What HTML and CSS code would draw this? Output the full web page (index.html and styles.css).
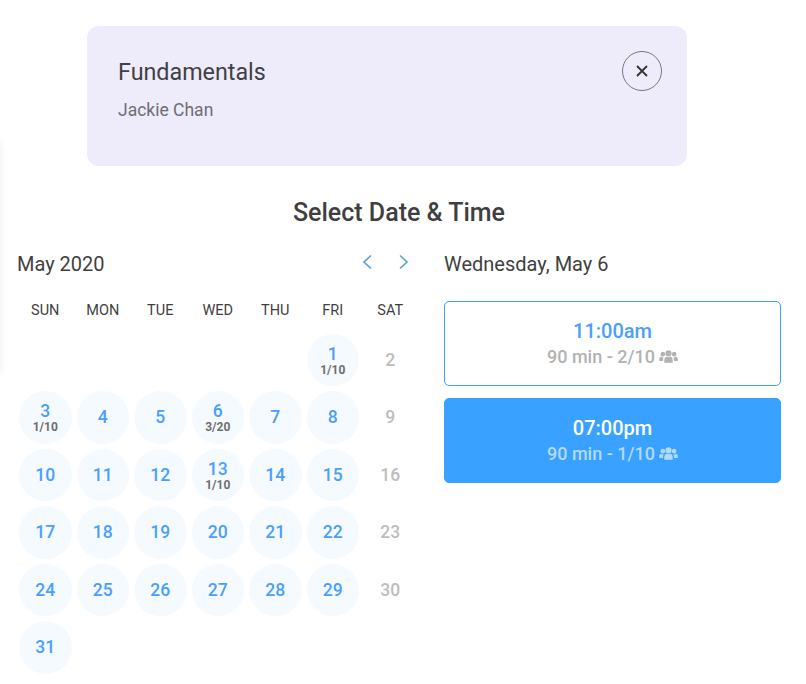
FILE: index.html
```html
<!DOCTYPE html>
<html lang="en">
<head>
<meta charset="utf-8">
<title>Select Date &amp; Time</title>
<link rel="stylesheet" href="styles.css">
</head>
<body>
<div class="edge-shadow"></div>
<main class="page">
  <section class="summary">
    <div class="summary-text">
      <h2 class="summary-title">Fundamentals</h2>
      <p class="summary-sub">Jackie Chan</p>
    </div>
    <button class="close" aria-label="Close">
      <svg class="close-icon" viewBox="0 0 12 12" width="12" height="12"><path d="M1 1l10 10M11 1L1 11"/></svg>
    </button>
  </section>
  <h1 class="heading">Select Date &amp; Time</h1>
  <div class="columns">
    <section class="calendar">
      <div class="cal-head">
        <span class="month">May 2020</span>
        <div class="nav">
          <svg class="chev" viewBox="0 0 10 16" width="10" height="16"><path d="M8 1.500L1 8l7 6.500"/></svg>
          <svg class="chev" viewBox="0 0 10 16" width="10" height="16"><path d="M1 1.500L8 8l-7 6.500"/></svg>
        </div>
      </div>
      <div class="weekdays">
        <span>SUN</span><span>MON</span><span>TUE</span><span>WED</span><span>THU</span><span>FRI</span><span>SAT</span>
      </div>
      <div class="days">
        <span class="day blank"></span><span class="day blank"></span><span class="day blank"></span><span class="day blank"></span><span class="day blank"></span>
        <div class="day on count"><b>1</b><small>1/10</small></div>
        <div class="day off"><b>2</b></div>
        <div class="day on count"><b>3</b><small>1/10</small></div>
        <div class="day on"><b>4</b></div>
        <div class="day on"><b>5</b></div>
        <div class="day on count"><b>6</b><small>3/20</small></div>
        <div class="day on"><b>7</b></div>
        <div class="day on"><b>8</b></div>
        <div class="day off"><b>9</b></div>
        <div class="day on"><b>10</b></div>
        <div class="day on"><b>11</b></div>
        <div class="day on"><b>12</b></div>
        <div class="day on count"><b>13</b><small>1/10</small></div>
        <div class="day on"><b>14</b></div>
        <div class="day on"><b>15</b></div>
        <div class="day off"><b>16</b></div>
        <div class="day on"><b>17</b></div>
        <div class="day on"><b>18</b></div>
        <div class="day on"><b>19</b></div>
        <div class="day on"><b>20</b></div>
        <div class="day on"><b>21</b></div>
        <div class="day on"><b>22</b></div>
        <div class="day off"><b>23</b></div>
        <div class="day on"><b>24</b></div>
        <div class="day on"><b>25</b></div>
        <div class="day on"><b>26</b></div>
        <div class="day on"><b>27</b></div>
        <div class="day on"><b>28</b></div>
        <div class="day on"><b>29</b></div>
        <div class="day off"><b>30</b></div>
        <div class="day on"><b>31</b></div>
      </div>
    </section>
    <section class="times">
      <div class="date-label">Wednesday, May 6</div>
      <div class="slot">
        <div class="slot-time">11:00am</div>
        <div class="slot-meta">90 min - 2/10
          <svg class="people" viewBox="0 0 20 14" width="19" height="13"><path d="M10 .4a3.300 3.300 0 1 1 0 6.600 3.300 3.300 0 0 1 0-6.600zM3.900 2a2.500 2.500 0 1 1 0 5 2.500 2.500 0 0 1 0-5zM16.100 2a2.500 2.500 0 1 1 0 5 2.500 2.500 0 0 1 0-5zM5.500 13.600v-2.800c0-1.900 1.200-3.200 2.500-3.400.6.300 1.200.5 2 .5s1.400-.2 2-.5c1.300.2 2.500 1.500 2.500 3.400v2.800zM0 11.800V9.600C0 8.500.9 7.500 1.900 7.400c.6.400 1.200.6 2 .6.400 0 .8-.1 1.200-.2-.6.800-1 1.900-1 3v1zM20 11.800h-4.100v-1c0-1.100-.4-2.200-1-3 .4.100.8.200 1.200.2.800 0 1.400-.2 2-.6 1 .1 1.900 1.100 1.900 2.200z"/></svg>
        </div>
      </div>
      <div class="slot active">
        <div class="slot-time">07:00pm</div>
        <div class="slot-meta">90 min - 1/10
          <svg class="people" viewBox="0 0 20 14" width="19" height="13"><path d="M10 .4a3.300 3.300 0 1 1 0 6.600 3.300 3.300 0 0 1 0-6.600zM3.900 2a2.500 2.500 0 1 1 0 5 2.500 2.500 0 0 1 0-5zM16.100 2a2.500 2.500 0 1 1 0 5 2.500 2.500 0 0 1 0-5zM5.500 13.600v-2.800c0-1.900 1.200-3.200 2.500-3.400.6.300 1.200.5 2 .5s1.400-.2 2-.5c1.300.2 2.500 1.500 2.500 3.400v2.800zM0 11.800V9.600C0 8.500.9 7.500 1.900 7.400c.6.400 1.200.6 2 .6.400 0 .8-.1 1.200-.2-.6.800-1 1.900-1 3v1zM20 11.800h-4.100v-1c0-1.100-.4-2.200-1-3 .4.100.8.200 1.200.2.800 0 1.400-.2 2-.6 1 .1 1.900 1.100 1.900 2.200z"/></svg>
        </div>
      </div>
    </section>
  </div>
</main>
</body>
</html>
```
FILE: styles.css
```css
* { box-sizing: border-box; }
html, body { margin: 0; padding: 0; height: 684px; overflow: hidden; background: #fff; }
body { font-family: Roboto, "Liberation Sans", sans-serif; color: #3f3f3f; }
.edge-shadow { position: absolute; left: -20px; top: 140px; width: 20px; height: 235px; border-radius: 6px; box-shadow: 0 0 10px rgba(0,0,0,.08); }
.page { width: 806px; padding-top: 26px; }
.summary { width: 600px; height: 140px; margin-left: 87px; padding: 25px 25px 0 31px; background: #eeebfa; border-radius: 12px; display: flex; justify-content: space-between; align-items: flex-start; }
.summary-title { margin: 7px 0 0; font-size: 23.3px; font-weight: 400; line-height: 28px; color: #3f3f46; }
.summary-sub { margin: 13px 0 0; font-size: 17.5px; line-height: 22px; color: #6f6c76; }
.close { width: 40px; height: 40px; padding: 0; border: 1px solid #77777c; border-radius: 50%; background: transparent; display: flex; align-items: center; justify-content: center; }
.close-icon { fill: none; stroke: #333; stroke-width: 1.8; }
.heading { margin: 32px 0 0; text-align: center; font-size: 25px; line-height: 30px; font-weight: 500; color: #3f3f3f; padding-right: 8px; }
.columns { display: flex; margin-top: 25px; padding-left: 16.5px; }
.calendar { width: 402.5px; }
.cal-head { display: flex; justify-content: space-between; align-items: center; height: 22px; padding-left: 0.5px; padding-right: 10px; }
.month { font-size: 20px; line-height: 22px; color: #3f3f3f; }
.nav { display: flex; gap: 26px; margin-top: -4px; }
.chev { fill: none; stroke: #5ba3cf; stroke-width: 1.7; }
.weekdays { display: grid; grid-template-columns: repeat(7, 57.5px); margin-top: 26px; height: 20px; font-size: 14.5px; line-height: 20px; text-align: center; color: #3f3f3f; }
.days { display: grid; grid-template-columns: repeat(7, 57.5px); grid-auto-rows: 57.5px; margin-top: 10px; }
.day { display: flex; flex-direction: column; align-items: center; justify-content: center; margin: 2.5px; border-radius: 50%; }
.day b { font-size: 17.5px; line-height: 18px; font-weight: 500; }
.day small { font-size: 12px; line-height: 12px; font-weight: 700; color: #6e6e6e; margin-top: 1px; }
.day.count { padding-top: 1px; }
.day.on { background: #f5faff; }
.day.on b { color: #4a9ffc; }
.day.off b { color: #bdbdbd; }
.times { width: 337px; margin-left: 25px; }
.date-label { height: 22px; font-size: 20px; line-height: 22px; color: #3f3f3f; }
.slot { height: 85px; margin-top: 26px; padding-bottom: 1px; border: 1px solid #40a0ff; border-radius: 5px; display: flex; flex-direction: column; align-items: center; justify-content: center; }
.slot.active { margin-top: 12px; background: #39a1ff; border-color: #39a1ff; }
.slot-time { font-size: 20px; line-height: 26px; font-weight: 500; color: #4a9ffc; margin-bottom: 1px; }
.slot-meta { font-size: 18px; line-height: 24px; font-weight: 500; color: #b2b2b2; display: flex; align-items: center; gap: 4px; }
.people { fill: #b2b2b2; }
.active .slot-time { color: #fff; }
.active .slot-meta { color: #b3dafd; }
.active .people { fill: #b3dafd; }
```
